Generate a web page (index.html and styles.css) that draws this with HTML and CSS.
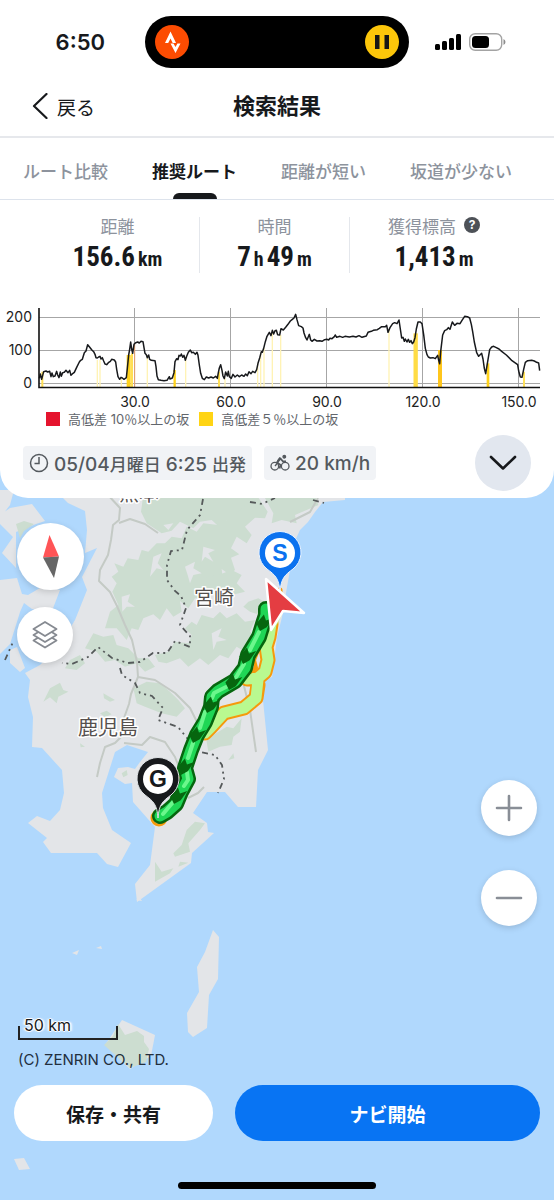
FILE: index.html
```html
<!DOCTYPE html>
<html lang="ja">
<head>
<meta charset="utf-8">
<meta name="viewport" content="width=device-width, initial-scale=1">
<title>検索結果</title>
<link rel="stylesheet" href="styles.css">
</head>
<body>
<div class="app">
  <header class="sheet">
    <div class="status">
      <span class="status-time">6:50</span>
      <div class="island">
        <svg class="island-icon" viewBox="0 0 34 34" aria-hidden="true"><circle cx="17" cy="17" r="17" fill="#fc4c02"/><path d="M10 18 15.500 6.500 21 18H17.700L15.500 13.500 13.200 18Z" fill="#fff"/><path d="M15.500 18.500H18.500L20.500 22 22.400 18.500H25.500L20.500 28Z" fill="#fff"/></svg>
        <svg class="island-icon" viewBox="0 0 34 34" aria-hidden="true"><circle cx="17" cy="17" r="17" fill="#fcc60a"/><path d="M10 10h4.500v14H10zM19.500 10H24v14h-4.500z" fill="#161616"/></svg>
      </div>
      <div class="status-icons">
        <svg width="27" height="18" viewBox="0 0 27 18" aria-hidden="true"><rect x="0" y="11" width="5" height="6" rx="1.500"/><rect x="7" y="8" width="5" height="9" rx="1.500"/><rect x="14" y="5" width="5" height="12" rx="1.500"/><rect x="21" y="1" width="5" height="16" rx="1.500"/></svg>
        <svg width="37" height="18" viewBox="0 0 37 18" aria-hidden="true"><rect x=".7" y=".7" width="32" height="16.600" rx="5.500" fill="none" stroke="#a3a3a3" stroke-width="1.400"/><rect x="3" y="3" width="17" height="12" rx="3.500"/><path d="M34.500 6v6q2-1 2-3t-2-3Z" fill="#8c8c8c"/></svg>
      </div>
    </div>

    <nav class="navbar">
      <a class="back" href="#"><svg width="16" height="26" viewBox="0 0 16 26" aria-hidden="true"><path d="M14.500 1 2 13l12.500 12" fill="none" stroke="#17191c" stroke-width="2.200" stroke-linecap="round" stroke-linejoin="round"/></svg>戻る</a>
      <h1 class="title">検索結果</h1>
    </nav>

    <div class="tabs" role="tablist">
      <button class="tab" role="tab" aria-selected="false">ルート比較</button>
      <button class="tab tab-active" role="tab" aria-selected="true">推奨ルート</button>
      <button class="tab" role="tab" aria-selected="false">距離が短い</button>
      <button class="tab" role="tab" aria-selected="false">坂道が少ない</button>
    </div>

    <dl class="stats">
      <div class="stat"><dt>距離</dt><dd>156.6<small>km</small></dd></div>
      <div class="stat"><dt>時間</dt><dd>7<small>h</small><span class="part">49</span><small>m</small></dd></div>
      <div class="stat"><dt>獲得標高<button class="help" aria-label="獲得標高について">?</button></dt><dd>1,413<small>m</small></dd></div>
    </dl>

    <svg class="chart" viewBox="0 0 554 110" role="img" aria-label="標高グラフ">
      <g stroke="#a6a6a6" stroke-width="1"><path d="M39 17.500H540M39 50.500H540M39 83.500H540"/><path d="M134.500 8V87M230.500 8V87M326.500 8V87M422.500 8V87M518.500 8V87"/></g>
      <g transform="scale(.33333)">
        <path d="M386 165V262" stroke="#ffd21c" stroke-width="12"/>
        <path d="M524 210V262" stroke="#ffd21c" stroke-width="7"/>
        <path d="M657 215V262M127 215V262M396 160V262" stroke="#ffdf55" stroke-width="6"/>
        <path d="M404 130V262" stroke="#e9a06a" stroke-width="3"/>
        <path d="M292 180V262M300 180V262M364 235V262M442 165V262M557 170V262M675 235V262M773 190V262M782 160V262M792 145V262M817 100V262M842 105V262M1167 90V262" stroke="#fff3b5" stroke-width="4"/>
        <path d="M1247 100V262" stroke="#ffdc45" stroke-width="13"/>
        <path d="M1320 150V262" stroke="#ffc61c" stroke-width="12"/>
        <path d="M1464 190V262" stroke="#ffd21c" stroke-width="8"/>
        <path d="M1572 215V262" stroke="#ffe15c" stroke-width="6"/>
        <path fill="none" stroke="#17191c" stroke-width="4.500" stroke-linejoin="round" d="M118 235 121 222 125 238 131 215 138 213 143 216 149 214 153 230 156 219 160 230 165 228 170 214 173 225 177 233 181 216 184 229 188 218 193 217 198 211 204 218 209 211 213 226 219 220 223 217 230 202 238 186 242 181 247 178 253 158 258 153 263 134 268 140 275 149 281 155 285 163 288 173 292 174 296 171 300 169 303 177 307 173 311 183 315 192 320 194 325 188 331 184 335 178 343 180 347 186 350 208 354 230 359 238 363 232 367 234 372 238 379 233 382 205 386 165 389 148 392 126 395 147 398 160 402 133 407 128 413 126 418 129 423 124 429 125 432 143 435 160 439 164 442 173 446 165 449 178 454 181 465 182 468 200 471 228 475 239 483 241 492 242 501 241 508 230 510 237 517 234 522 218 525 185 530 176 534 179 537 166 541 168 544 162 548 172 552 166 556 181 560 169 565 157 571 150 575 158 580 157 586 163 591 157 594 166 598 195 602 220 607 235 613 239 619 231 626 234 633 231 640 234 647 229 652 235 655 218 658 204 662 194 666 211 669 228 673 236 677 216 682 228 685 214 688 230 694 235 699 223 705 231 712 225 718 230 725 225 732 229 737 222 742 227 747 215 753 221 758 214 765 218 770 209 774 190 779 174 784 155 787 157 791 145 796 125 801 109 808 97 813 107 817 91 821 102 825 92 829 91 833 104 839 105 843 86 850 90 857 82 864 73 871 63 877 58 882 54 887 43 891 59 896 77 904 80 909 84 912 99 917 113 921 120 928 103 932 120 936 124 943 118 951 123 959 122 966 124 974 119 980 118 986 120 990 115 996 116 1003 110 1006 105 1010 112 1020 109 1028 112 1035 109 1048 111 1059 109 1068 111 1077 107 1086 112 1099 108 1104 97 1114 94 1120 91 1132 89 1138 85 1145 80 1156 80 1160 76 1164 97 1170 83 1178 71 1184 68 1191 71 1197 60 1201 87 1205 114 1209 112 1213 124 1216 117 1221 126 1225 118 1229 127 1233 122 1237 131 1241 126 1245 113 1249 87 1254 66 1261 66 1266 71 1271 104 1276 145 1281 164 1285 171 1291 174 1299 173 1306 176 1313 166 1316 181 1319 191 1322 155 1328 105 1334 92 1340 89 1345 83 1350 88 1357 66 1364 76 1371 70 1380 71 1386 61 1394 49 1402 50 1409 54 1414 73 1418 95 1423 126 1430 158 1436 169 1445 160 1449 177 1453 205 1457 221 1463 185 1469 149 1475 141 1481 139 1489 143 1497 147 1505 154 1519 165 1536 182 1553 194 1556 213 1561 231 1566 232 1571 208 1576 187 1583 182 1595 181 1603 183 1610 187 1616 189 1619 212"/>
      </g>
      <path d="M39 8V87.500H540" fill="none" stroke="#111" stroke-width="1.600"/>
      <g class="axis"><g text-anchor="end"><text x="32" y="22">200</text><text x="32" y="55">100</text><text x="32" y="88">0</text></g>
      <g text-anchor="middle"><text x="135" y="107">30.0</text><text x="231" y="107">60.0</text><text x="327" y="107">90.0</text><text x="423" y="107">120.0</text><text x="519" y="107">150.0</text></g></g>
    </svg>
    <ul class="legend">
      <li><span class="swatch swatch-red"></span>高低差 10％以上の坂</li>
      <li><span class="swatch swatch-yellow"></span>高低差５％以上の坂</li>
    </ul>

    <div class="options">
      <button class="chip"><svg width="20" height="20" viewBox="0 0 20 20" aria-hidden="true" fill="none" stroke="#54595e" stroke-width="1.500"><circle cx="10" cy="10" r="8.500"/><path d="M10 4V10.500H5.500"/></svg><span>05/04<span class="kanji">月曜日</span> 6:25 <span class="kanji">出発</span></span></button>
      <button class="chip"><svg width="20" height="20" viewBox="0 0 20 20" aria-hidden="true" fill="none" stroke="#54595e" stroke-width="1.300" stroke-linejoin="round"><circle cx="4.800" cy="13.200" r="3.800"/><circle cx="15.200" cy="13.200" r="3.800"/><path d="M9.500 15.500 10.500 12 7 9.500 10.500 5.500 13 8.500H16" stroke-width="1.900"/><path d="M5 13 8 9.500M7.500 8 10 4.500" /><circle cx="14.300" cy="3.700" r="1.300" fill="#54595e"/></svg>20 km/h</button>
      <button class="collapse" aria-label="閉じる"><svg width="28" height="16" viewBox="0 0 28 16" aria-hidden="true"><path d="M2 2 14 13.500 26 2" fill="none" stroke="#17191c" stroke-width="2.600" stroke-linecap="round" stroke-linejoin="round"/></svg></button>
    </div>
  </header>

  <main class="map">
    <svg class="map-canvas" viewBox="0 468 554 732" preserveAspectRatio="xMidYMid slice" aria-label="ルート地図">
      <defs>
        <clipPath id="land"><path id="kyushu" d="M63 460H345V500L323 502 315 512 308 522 300 530 293 545 290 570 287 587 282 617 277 637 272 677 265 680 262 690 268 750 258 770 256 807H238L225 792H207L193 813 207 823 208 832 214 833 192 853 191 863 137 902 135 884 150 865 155 827 133 802 132 783 125 784 114 777 118 768 128 767 135 769 140 762 148 752 127 745 115 752 102 793 103 808 112 830 131 843 118 867 107 864 97 853H51L43 842 47 838 28 823 37 816 50 821 60 810 64 793 62 770 42 748 32 747 33 717 28 697 30 680 25 673 40 665 60 645 75 620 87 590 82 577 97 548 85 553 87 530 85 511 68 503 63 498Z"/></clipPath>
      </defs>
      <rect x="-600" y="300" width="1800" height="1100" fill="#b0d8fd"/>
      <use href="#kyushu" fill="#e3e5e8"/>
      <g fill="#e3e5e8">
        <path d="M0 490H14L10 505 0 518ZM10 508 32 504 45 521 36 524 16 532 16 568 2 553 13 537 0 524V515ZM0 580 17 578 22 594 28 595 45 585 60 590 52 611 32 609 24 603 20 612 16 625 10 644 0 654ZM10 650 17 647 25 668 20 672 10 663Z"/>
        <path d="M213 930 219 937 218 979 209 995 207 1028 193 1037 188 1032 187 1013 199 992 197 967 205 952Z"/>
        <path d="M122 1020 155 1035 151 1056 130 1069 105 1045Z"/>
        <path d="M14 1159 24 1158 30 1169 19 1170ZM72 953 79 950 77 955ZM96 948 101 946 102 949ZM136 900 140 898 142 901Z"/>
      </g>
      <path d="M16 524 24 521 34 524 24 531 20 538ZM118 1024 125 1035 137 1031 144 1036V1042L149 1049 146 1062 130 1068 104 1045 113 1036Z" fill="#ccddd0"/>
      <g clip-path="url(#land)">
        <g fill="#ccddd0" transform="translate(85 495) scale(.33333)">
          <path d="M175 0 168 50 185 85 230 115 260 107 285 80 325 100 345 80 380 75 410 103 425 75 455 80 465 65 508 68 516 48 512 0Z"/>
          <path d="M515 0 548 50 540 70 510 68 480 95 500 120 485 145 455 125 438 160 463 178 438 188 450 225 435 240 410 222 415 265 395 270 378 252 360 265 375 315 330 310 310 340 285 318 290 350 265 365 245 340 225 375 205 358 175 370 160 405 140 400 125 435 95 400 60 400 75 350 100 330 82 290 95 265 80 245 100 230 88 205 115 215 128 190 160 195 170 165 190 170 215 145 240 145 260 125 290 130 305 95 335 110 355 85 400 90 450 60Z"/>
          <path d="M535 0 565 55 560 85 590 75 635 85 630 60 700 30 690 0Z"/>
          <path d="M350 250 400 240 440 225 470 240 455 265 480 290 440 300 400 290 350 320Z"/>
          <path d="M350 360 385 370 405 350 425 370 455 355 480 380 510 375 495 410 520 425 490 440 480 470 455 455 430 490 405 480 370 510 345 490 310 515 285 490 245 505 220 500 210 480 250 470 270 440 310 445 320 420 300 400 320 380 335 390Z"/>
          <path d="M25 415 55 425 85 420 95 450 130 460 160 490 190 490 210 515 180 530 155 505 120 515 90 495 60 500 35 470 0 460Z"/>
          <path d="M-120 195 -75 185-50 205-85 235-105 225ZM-45 495-15 480 0 505-25 525-60 520ZM490 320 520 310 545 325 525 360 495 350 475 335Z"/>
          <path d="M145 580 185 560 225 565 255 590 280 615 300 640 275 665 230 655 180 635 155 625Z"/>
        </g>
        <g fill="#ccddd0" transform="translate(0 680) scale(.33333)"><path d="M150 25 180 8 190 30 205 35 175 50 170 70 150 52 130 65ZM310 40 345 60 330 65 312 55ZM620 175 640 165 680 140 700 145 725 115 720 155 700 170 695 195 660 200 625 215 620 185ZM685 240 700 220 703 235ZM585 425 615 430 600 450 565 490 570 515 525 530 520 520 545 495 560 450ZM465 545 485 575 520 565 510 580 465 605ZM540 545 565 548 535 560ZM365 280 380 270 383 285 370 292ZM300 100 320 92 335 103 315 112ZM240 190 255 200 242 202Z"/></g>
        <g fill="#e3e5e8" transform="translate(85 495) scale(.33333)"><path d="M205 185 230 175 218 205 235 225 215 220 195 245ZM300 215 330 200 325 220 350 235 325 240 315 265 308 240ZM355 155 390 165 370 175 385 200 360 185 350 200ZM110 305 135 298 128 320 150 335 125 335 112 350ZM380 415 410 400 400 425 425 435 395 440 385 465ZM235 90 265 85 250 105Z"/></g>
        <g fill="none" stroke="#c4cac5" stroke-width="2" stroke-linejoin="round">
          <path d="M108 495 120 508 119 520 113 525 111 540 108 555 100 570 99 581 110 592 117 606 125 625 132 640 137 662 138 677 131 694 129 704 124 718 123 735 115 743 105 747 100 763 97 777M119 523 130 519 145 524 158 533"/>
          <path d="M124 743 142 745 150 737 165 742 175 757 180 770M138 677 155 680 175 693 190 708 198 724M290 522 310 512 318 498M243 682 250 710 256 752M188 798 198 793 204 787"/>
        </g>
      </g>
      <g fill="none" stroke="#55595a" stroke-width="1.800" stroke-dasharray="6 4 2 4 2 4">
        <path d="M203 499 200 515 187 530 182 550 171 551 167 565 167 580 175 591 181 596 186 608 180 625 190 636 190 647 175 641 167 653 153 653 140 662 128 663 112 658 98 647 88 657 72 664 62 663"/>
        <path d="M120 668 122 675 135 683 140 693 152 696 163 708 158 720 178 727 187 738 200 752 215 755 222 765 224 779 218 793"/>
        <path d="M250 502 262 504 275 498M5 660 13 642M313 500 324 503"/>
      </g>
      <g fill="none" stroke-linejoin="round" stroke-linecap="round">
        <path d="M271 624 269 637 266 647 268 660 265 672 258 678 247 679M258 685 256 698 244 708 224 713 211 727 205 733" stroke="#f59a0c" stroke-width="15"/>
        <path d="M280 590 280 610 274 625" stroke="#f59a0c" stroke-width="5"/>
        <path d="M279 608 271 624 269 637 266 647 268 660 265 672 258 678 247 679M258 680 256 698 244 708 224 713 211 727 205 733" stroke="#b9f990" stroke-width="11"/>
        <path d="M183 755 178 773 180 788" stroke="#f59a0c" stroke-width="3"/>
        <path d="M258 650 254 660 256 668 250 672" stroke="#f59a0c" stroke-width="4"/>
        <circle cx="159" cy="818" r="7" stroke="#f59a0c" stroke-width="3"/>
        <path d="M266 609 266 615 263 624 259 637 248 655 245 668 235 681 218 691 212 697 211 707 205 722 197 735 191 750 185 768 188 779 181 792 176 804 167 812 160 816" stroke="#06660f" stroke-width="16"/>
        <path d="M266 609 266 615 263 624 259 637 248 655 245 668 235 681 218 691 212 697 211 707 205 722 197 735 191 750 185 768 188 779 181 792 176 804 167 812 160 816" stroke="#1fd655" stroke-width="11"/>
        <path d="M259 632 250 650M244 664 235 679M226 687 214 693 212 698M205 712 200 728M193 743 188 758M187 772 188 780 184 786M174 801 163 814" stroke="#6bf78c" stroke-width="4"/>
        <g fill="#06660f" stroke="none">
          <path id="arrow" d="M-7 3-3-8 1-3 7-8 4 3-1 9Z" transform="translate(264 623) rotate(20)"/>
          <use href="#arrow" transform="translate(-17 33)"/><use href="#arrow" transform="translate(-31 59)"/><use href="#arrow" transform="translate(-53 82)"/><use href="#arrow" transform="translate(-67 112)"/><use href="#arrow" transform="translate(-79 144)"/><use href="#arrow" transform="translate(-86 173)"/>
        </g>
      </g>
      <g class="place"><text x="194" y="605">宮崎</text><text x="78" y="735">鹿児島</text><text x="119" y="501">熊本</text></g>
      <path d="M280 592C279 578 275 575 267 569A21 21 0 1 1 293 569C285 575 281 578 280 592Z" fill="#0b72ef" stroke="#e9f3ff" stroke-width="1"/>
      <circle cx="280" cy="553" r="15" fill="#fff"/><text class="pin pin-start" x="280" y="561">S</text>
      <path d="M158 818C157 804 153 801 145 795A21 21 0 1 1 171 795C163 801 159 804 158 818Z" fill="#17191c" stroke="#dfe3e6" stroke-width="1"/>
      <circle cx="158" cy="779" r="15" fill="#fff"/><text class="pin" x="158" y="787">G</text>
      <path d="M266 579 304 613 283 611 271 630Z" fill="#e43d42" stroke="#fff" stroke-width="2.500" stroke-linejoin="round"/>
    </svg>

    <div class="controls">
      <div class="controls-left">
        <button class="round compass" aria-label="コンパス"><svg width="18" height="44" viewBox="0 0 18 44" aria-hidden="true"><path d="M7.500 0 17 21.500 1 22.500Z" fill="#ff5456"/><path d="M1 22.500 17 21.500 12 43Z" fill="#666"/></svg></button>
        <button class="round" aria-label="地図の種類"><svg width="26" height="28" viewBox="0 0 26 28" aria-hidden="true" fill="#fff" stroke="#868a91" stroke-width="1.800" stroke-linejoin="round"><path d="M13 12.500 1.500 19.500 13 26.500 24.500 19.500Z"/><path d="M13 7 1.500 14 13 21 24.500 14Z"/><path d="M13 1 1.500 8 13 15 24.500 8Z"/></svg></button>
      </div>
      <div class="controls-right">
        <button class="round" aria-label="拡大"><svg width="28" height="28" viewBox="0 0 28 28" aria-hidden="true"><path d="M2 14H26M14 2V26" stroke="#898e96" stroke-width="2.600" stroke-linecap="round"/></svg></button>
        <button class="round" aria-label="縮小"><svg width="28" height="28" viewBox="0 0 28 28" aria-hidden="true"><path d="M2 14H26" stroke="#898e96" stroke-width="2.600" stroke-linecap="round"/></svg></button>
      </div>
    </div>
    <div class="scale"><span class="scale-text">50 km</span></div>
    <p class="credit">(C) ZENRIN CO., LTD.</p>
    <div class="actions">
      <button class="action">保存・共有</button>
      <button class="action action-primary">ナビ開始</button>
    </div>
    <div class="home"></div>
  </main>
</div>
</body>
</html>
```
FILE: styles.css
```css
* { box-sizing: border-box; }
body {
  margin: 0;
  font-family: Inter, "Noto Sans CJK JP", sans-serif;
  color: #17191c;
  background: #b0d8fd;
}
button {
  margin: 0;
  padding: 0;
  border: 0;
  background: none;
  color: inherit;
  font: inherit;
  cursor: pointer;
}
svg { display: block; flex-shrink: 0; }
.app { display: flex; flex-direction: column; min-height: 100vh; }

.sheet {
  position: relative;
  z-index: 1;
  background: #fff;
  border-radius: 0 0 28px 28px;
}
.status {
  display: grid;
  grid-template-columns: 1fr 264px 1fr;
  align-items: center;
  height: 76px;
  padding-top: 8px;
}
.status-time { padding-right: 40px; text-align: right; font-size: 22px; font-weight: 600; line-height: 24px; }
.island {
  display: flex;
  justify-content: space-between;
  align-items: center;
  height: 52px;
  padding: 0 10px;
  border-radius: 26px;
  background: #000;
}
.island-icon { width: 34px; height: 34px; }
.status-icons { display: flex; gap: 7px; padding-left: 26px; }

.navbar {
  display: grid;
  grid-template-columns: 1fr auto 1fr;
  align-items: center;
  height: 62px;
  padding: 0 32px;
  border-bottom: 2px solid #e6e8ec;
}
.back { display: flex; align-items: center; gap: 9px; color: inherit; font-size: 19px; text-decoration: none; }
.title { margin: 0; font-size: 22px; font-weight: 700; line-height: 32px; }

.tabs {
  display: flex;
  gap: 44px;
  height: 62px;
  padding: 0 23px;
  border-bottom: 1px solid #dde3ec;
}
.tab { position: relative; padding-top: 4px; color: #8d939d; font-size: 17px; font-weight: 500; white-space: nowrap; }
.tab-active { color: #17191c; font-weight: 700; }
.tab-active::after {
  content: "";
  position: absolute;
  bottom: 0;
  left: calc(50% - 22px);
  width: 44px;
  height: 6px;
  border-radius: 6px 6px 0 0;
  background: #17191c;
}

.stats {
  display: grid;
  grid-template-columns: 163fr 150fr 169fr;
  margin: 17px 36px 0;
}
.stat { height: 56px; text-align: center; }
.stat + .stat { border-left: 1px solid #e4e7ec; }
.stat dt { display: flex; justify-content: center; align-items: center; gap: 8px; height: 16px; color: #8d939d; font-size: 17px; white-space: nowrap; }
.stat dd { margin: 8px 0 0; font: bold 27px/32px "Roboto Condensed", "Liberation Sans Narrow", "DejaVu Sans Condensed", sans-serif; white-space: nowrap; }
.stat small { margin-left: 3px; font-size: 20px; }
.stat .part { margin-left: 3px; }
.help { width: 16px; height: 16px; border-radius: 50%; background: #4d5157; color: #fff; font-size: 12px; font-weight: 700; line-height: 16px; }

.chart { width: 100%; margin-top: 27px; }
.axis { font-size: 14px; fill: #222; }

.legend {
  display: flex;
  gap: 10px;
  margin: 0;
  padding: 0 46px;
  list-style: none;
  color: #62666c;
  font-size: 13px;
  line-height: 18px;
}
.legend li { display: flex; align-items: center; gap: 8px; }
.swatch { width: 14px; height: 14px; }
.swatch-red { background: #e5142e; }
.swatch-yellow { background: #ffd414; }

.options { display: flex; align-items: center; gap: 12px; padding: 7px 23px; }
.chip {
  display: flex;
  align-items: center;
  gap: 5px;
  height: 34px;
  padding: 0 6px;
  border-radius: 4px;
  background: #f1f3f6;
  color: #54595e;
  font-size: 19px;
  font-weight: 500;
  white-space: nowrap;
}
.kanji { font-size: 17px; }
.collapse {
  display: grid;
  place-items: center;
  width: 56px;
  height: 56px;
  margin-left: auto;
  border-radius: 50%;
  background: #e2e7ef;
}

.map {
  position: relative;
  display: flex;
  flex: 1;
  flex-direction: column;
  margin-top: -30px;
  padding-top: 55px;
}
.map-canvas { position: absolute; inset: 0; width: 100%; height: 100%; }
.map > div, .credit { position: relative; }
.place {
  font-family: "Noto Sans CJK JP", sans-serif;
  font-size: 20px;
  fill: #55504e;
  stroke: #fff;
  stroke-width: 3px;
  stroke-linejoin: round;
  paint-order: stroke;
}
.pin { font: bold 23px "Liberation Sans", sans-serif; text-anchor: middle; fill: #17191c; }
.pin-start { fill: #0b72ef; }

.controls { display: flex; flex: 1; justify-content: space-between; padding: 0 17px; }
.controls-left { display: flex; flex-direction: column; gap: 17px; }
.controls-right { display: flex; flex-direction: column; justify-content: flex-end; gap: 34px; padding-bottom: 92px; }
.round {
  display: grid;
  place-items: center;
  width: 56px;
  height: 56px;
  border-radius: 50%;
  background: #fff;
  box-shadow: 0 2px 6px rgb(0 0 0 / 15%);
}
.compass { width: 67px; height: 67px; }

.scale { align-self: flex-start; width: 100px; height: 22px; margin-left: 18px; }
.scale::before {
  content: "";
  position: absolute;
  inset: 8px 0 0;
  border: solid #222;
  border-width: 0 2px 2px;
}
.scale-text {
  position: absolute;
  left: 6px;
  top: -3px;
  font-size: 16px;
  line-height: 20px;
  text-shadow: 1px 0 #fff, -1px 0 #fff, 0 1px #fff, 0 -1px #fff, 2px 0 2px #fff, -2px 0 2px #fff;
}
.credit { margin: 10px 18px 0; color: #222f3d; font-size: 15px; line-height: 20px; }

.actions { display: grid; grid-template-columns: 199fr 305fr; gap: 22px; padding: 15px 14px 0; }
.action { height: 56px; border-radius: 28px; background: #fff; font-size: 19px; font-weight: 700; }
.action-primary { background: #0874f3; color: #fff; }
.home { align-self: center; width: 198px; height: 7px; margin: 41px 0 11px; border-radius: 4px; background: #000; }
```
